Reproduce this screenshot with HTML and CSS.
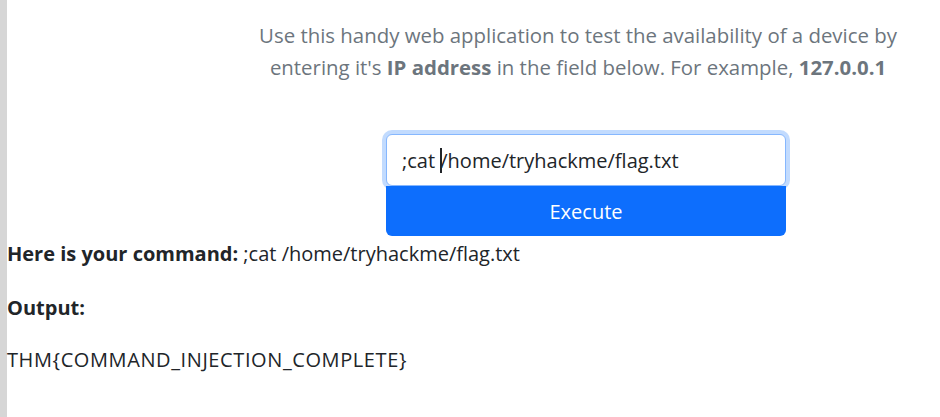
FILE: index.html
```html
<!DOCTYPE html>
<html lang="en">
<head>
<meta charset="utf-8">
<title>Command Injection</title>
<link rel="stylesheet" href="styles.css">
</head>
<body>
<div class="page">
  <aside class="edge"></aside>
  <main class="content">
    <section class="hero">
      <p class="lead">Use this handy web application to test the availability of a device by<br>entering it's <strong>IP address</strong> in the field below. For example, <strong>127.0.0.1</strong></p>
      <form class="ping">
        <div class="field">
          <input class="field-input" type="text" value=";cat /home/tryhackme/flag.txt">
          <span class="caret"></span>
        </div>
        <button class="execute" type="button">Execute</button>
      </form>
    </section>
    <p class="result result-command"><strong>Here is your command:</strong> ;cat /home/tryhackme/flag.txt</p>
    <p class="result result-label"><strong>Output:</strong></p>
    <p class="result result-output">THM{COMMAND_INJECTION_COMPLETE}</p>
  </main>
</div>
</body>
</html>
```

FILE: styles.css
```css
* { box-sizing: border-box; }

html, body {
  margin: 0;
  padding: 0;
  background: #fff;
}

body {
  font-family: "Open Sans", "Noto Sans", "Liberation Sans", sans-serif;
  font-size: 20px;
  color: #212529;
}

.page {
  display: flex;
  min-height: 100vh;
}

.edge {
  width: 7px;
  flex: 0 0 7px;
  background: #d6d6d6;
}

.content {
  flex: 1;
}

.hero {
  padding-top: 19px;
}

.lead {
  width: 700px;
  margin: 0 0 0 221px;
  text-align: center;
  color: #6c757d;
  line-height: 32px;
  font-size: 20.4px;
}

.lead strong {
  font-weight: 700;
}

.ping {
  width: 400px;
  margin: 51px 0 0 379px;
  display: flex;
  flex-direction: column;
}

.field {
  position: relative;
}

.field-input {
  display: block;
  width: 100%;
  height: 52px;
  padding: 0 15px;
  border: 1px solid #86b7fe;
  border-radius: 6px;
  box-shadow: 0 0 0 4px rgba(13, 110, 253, 0.25);
  font-family: inherit;
  font-size: 20px;
  color: #212529;
  background: #fff;
  outline: none;
}

.caret {
  position: absolute;
  left: 54px;
  top: 14px;
  width: 2px;
  height: 25px;
  background: #212529;
}

.execute {
  display: block;
  width: 100%;
  height: 50px;
  border: none;
  border-radius: 0 0 6px 6px;
  background: #0d6efd;
  color: #fff;
  font-family: inherit;
  font-size: 20px;
  padding: 0;
}

.result {
  margin: 0;
  line-height: 30px;
}

.result-command {
  margin-top: 3px;
}

.result-label {
  margin-top: 24px;
}

.result-output {
  margin-top: 22px;
  letter-spacing: 0.6px;
}
```
